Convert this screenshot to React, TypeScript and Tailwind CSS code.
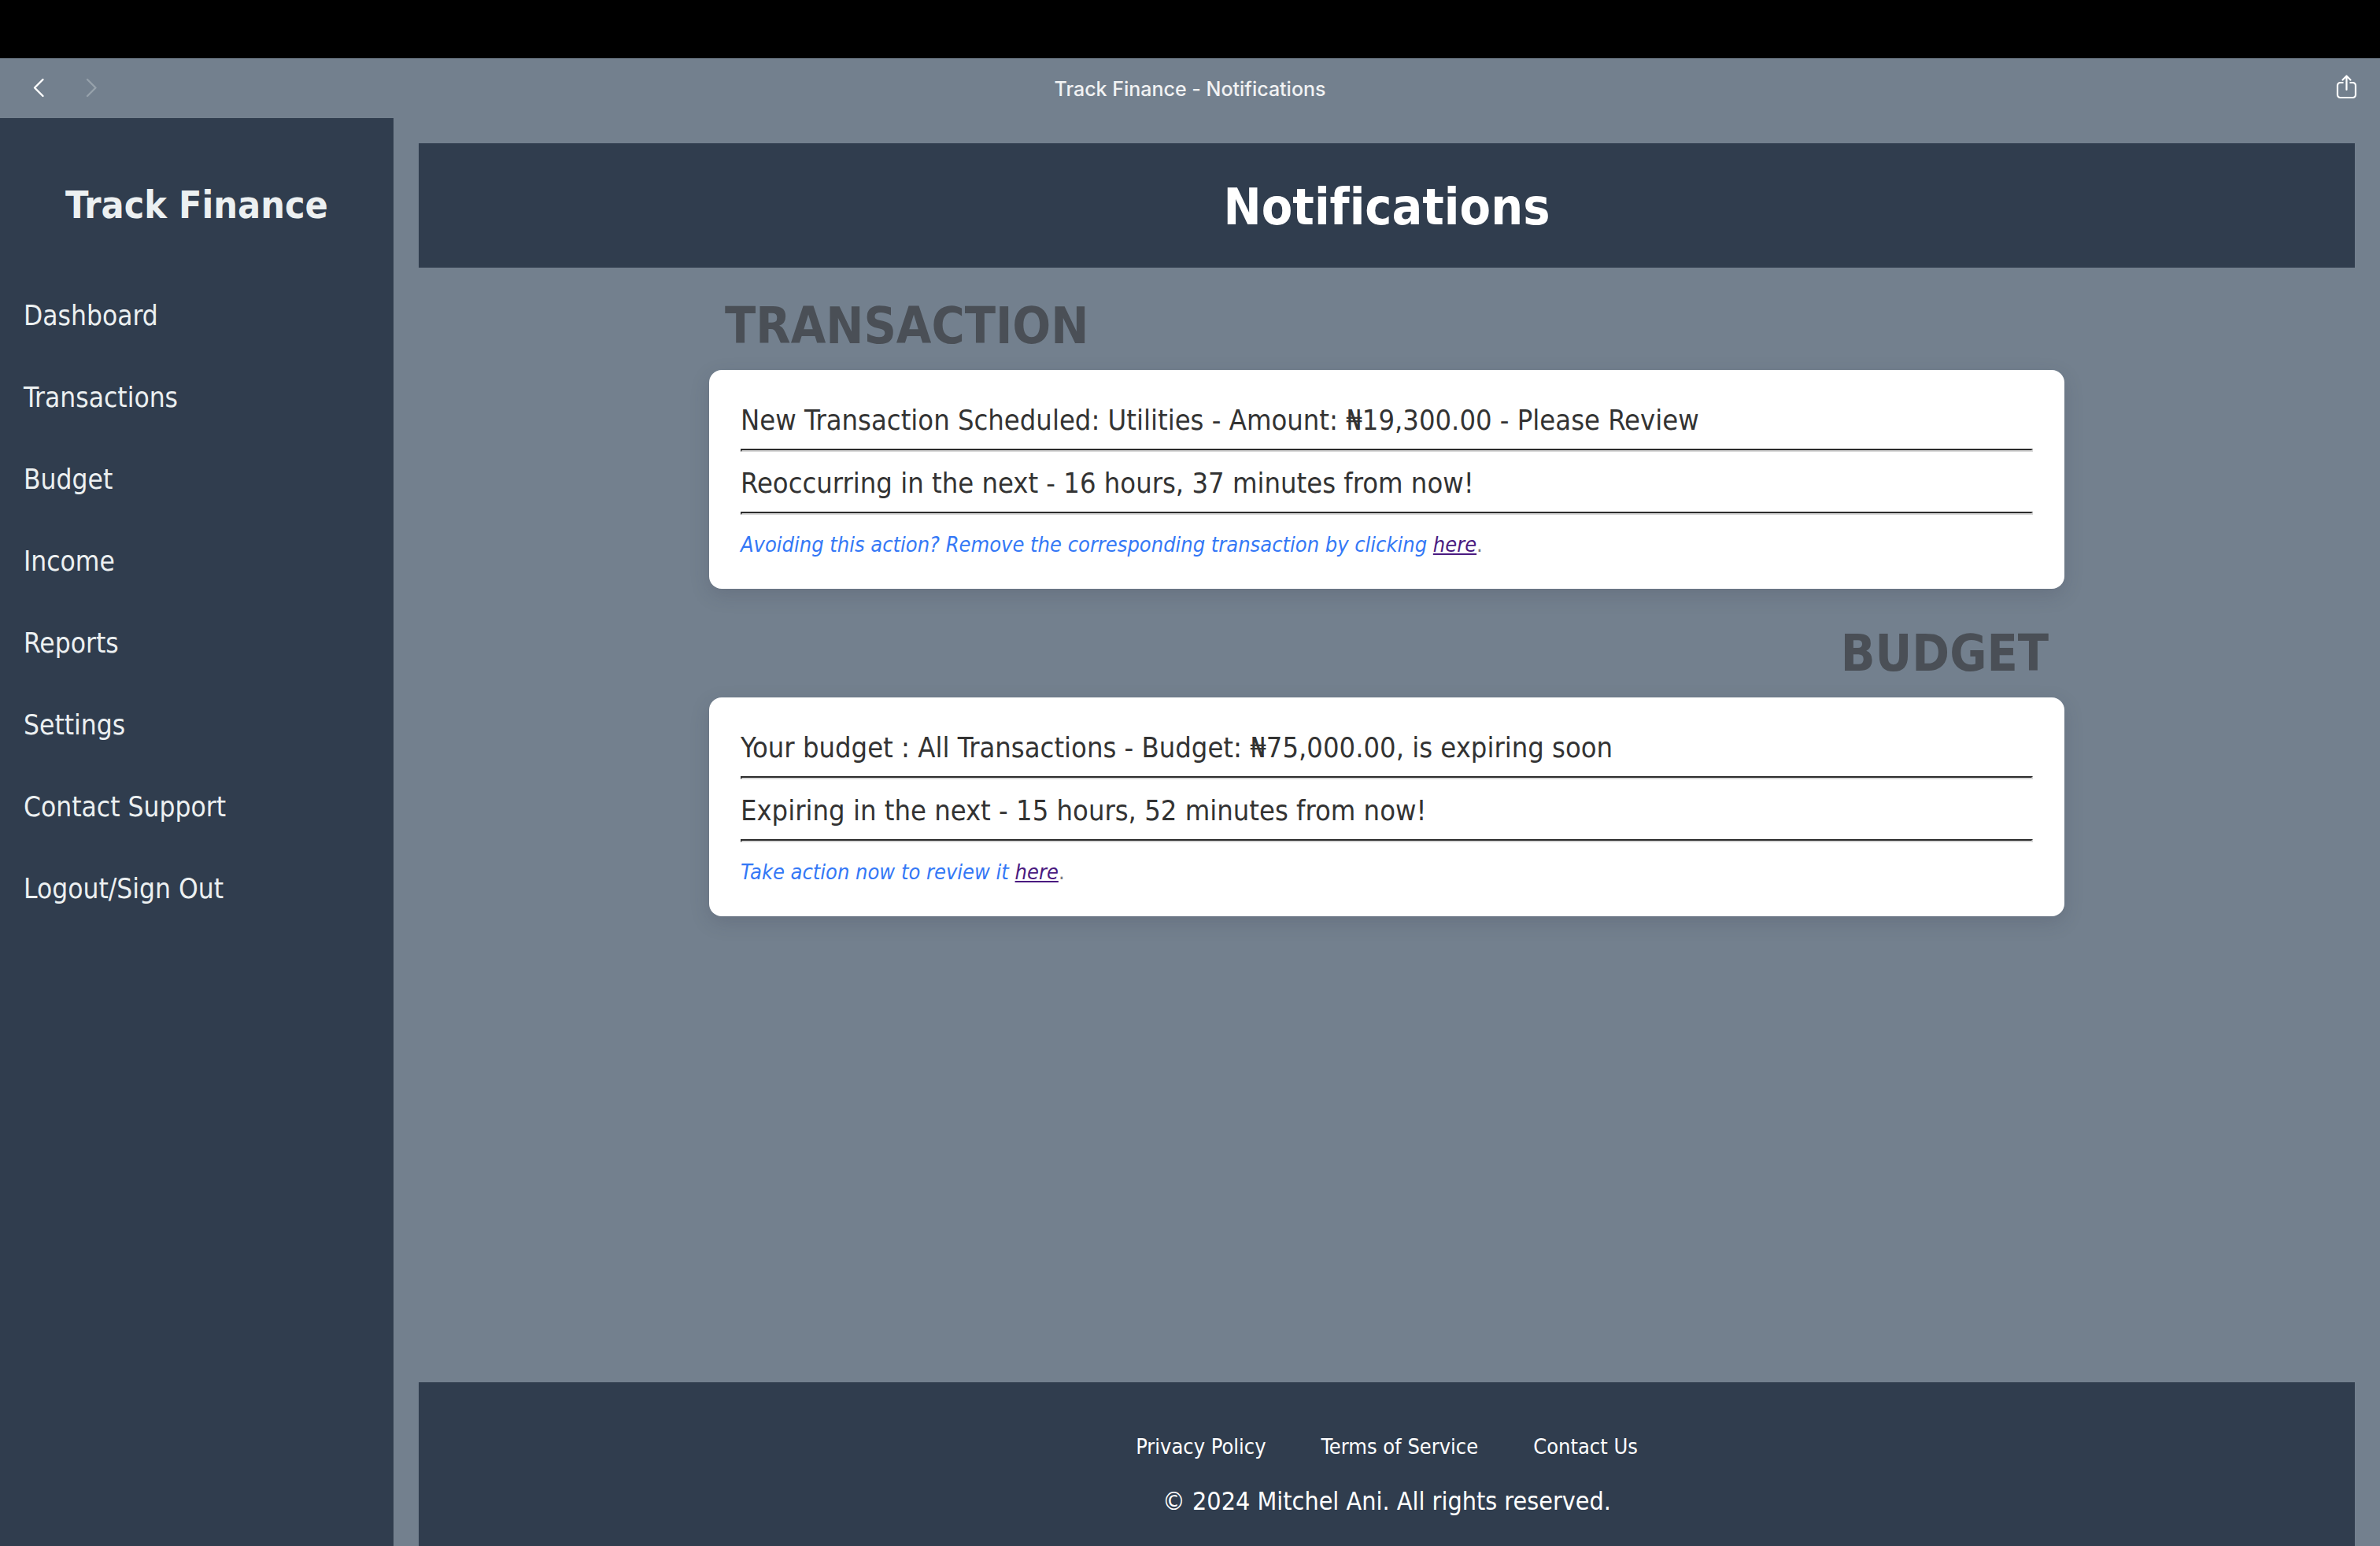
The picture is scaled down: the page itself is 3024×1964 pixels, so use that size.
import React from "react";

const navItems = [
  "Dashboard",
  "Transactions",
  "Budget",
  "Income",
  "Reports",
  "Settings",
  "Contact Support",
  "Logout/Sign Out",
];

const footerLinks = ["Privacy Policy", "Terms of Service", "Contact Us"];

type Notice = {
  heading: string;
  alignEnd: boolean;
  title: string;
  timing: string;
  action: string;
};

const notices: Notice[] = [
  {
    heading: "TRANSACTION",
    alignEnd: false,
    title: "New Transaction Scheduled: Utilities - Amount: ₦19,300.00 - Please Review",
    timing: "Reoccurring in the next - 16 hours, 37 minutes from now!",
    action: "Avoiding this action? Remove the corresponding transaction by clicking",
  },
  {
    heading: "BUDGET",
    alignEnd: true,
    title: "Your budget : All Transactions - Budget: ₦75,000.00, is expiring soon",
    timing: "Expiring in the next - 15 hours, 52 minutes from now!",
    action: "Take action now to review it",
  },
];

function TitleBar() {
  return (
    <div className="grid h-[76px] grid-cols-[1fr_auto_1fr] items-center px-7 font-['Inter',sans-serif]">
      <div className="flex items-center gap-10 pb-0.5 pl-2">
        <button type="button" aria-label="Back" className="text-white">
          <svg width="28" height="28" viewBox="0 0 28 28" fill="none" stroke="currentColor" strokeWidth="2.4" strokeLinecap="round" strokeLinejoin="round">
            <path d="M18.500 4 L8 14.500 L18.500 25" />
          </svg>
        </button>
        <button type="button" aria-label="Forward" disabled className="text-[#96a1ab]">
          <svg width="28" height="28" viewBox="0 0 28 28" fill="none" stroke="currentColor" strokeWidth="2.4" strokeLinecap="round" strokeLinejoin="round">
            <path d="M7 4 L17.500 14.500 L7 25" />
          </svg>
        </button>
      </div>
      <p className="pt-0.5 text-[25px] leading-8 font-medium text-[#f1f2f3]">Track Finance - Notifications</p>
      <button type="button" aria-label="Share" className="justify-self-end pb-1 text-white">
        <svg width="28" height="34" viewBox="0 0 28 34" fill="none" stroke="currentColor" strokeWidth="2.2" strokeLinecap="round" strokeLinejoin="round">
          <path d="M9.500 12 H5.500 A3.500 3.500 0 0 0 2 15.500 V27.500 A3.500 3.500 0 0 0 5.500 31 H21.500 A3.500 3.500 0 0 0 25 27.500 V15.500 A3.500 3.500 0 0 0 21.500 12 H17.500" strokeLinecap="butt" />
          <path d="M13.500 21 V4 M8.500 8.500 L13.500 3.500 L18.500 8.500" />
        </svg>
      </button>
    </div>
  );
}

function Sidebar() {
  return (
    <aside className="w-[500px] shrink-0 bg-[#303d4e] pt-[82px] text-[#ecf0f1]">
      <h2 className="text-center text-[48px] leading-[56px] font-bold">Track Finance</h2>
      <nav className="mt-[61px] flex flex-col">
        {navItems.map((item) => (
          <a key={item} href="#" className="px-[30px] py-7 text-[35px] leading-[48px]">
            {item}
          </a>
        ))}
      </nav>
    </aside>
  );
}

function Divider() {
  return (
    <hr className="mt-3 mb-4 border-2 border-t-[#2c2c2c] border-r-[#d8d8d8] border-b-[#d8d8d8] border-l-[#2c2c2c]" />
  );
}

function NoticeSection({ notice }: { notice: Notice }) {
  return (
    <section>
      <h2
        className={
          notice.alignEnd
            ? "mb-[18px] px-5 text-right text-[64px] leading-[76px] font-bold text-[#4a4f56]"
            : "mb-[18px] px-5 text-left text-[64px] leading-[76px] font-bold text-[#4a4f56]"
        }
      >
        {notice.heading}
      </h2>
      <div className="rounded-2xl bg-white px-10 pt-10 pb-[34px] text-[#333333] shadow-[0_8px_24px_rgba(50,50,70,0.18)]">
        <p className="text-4xl leading-[48px]">{notice.title}</p>
        <Divider />
        <p className="text-4xl leading-[48px]">{notice.timing}</p>
        <Divider />
        <p className="text-[27px] leading-[44px] text-[#777c82]">
          <em className="text-[#3478f6]">{notice.action} </em>
          <a href="#" className="text-[#4a1a80] italic underline">
            here
          </a>
          .
        </p>
      </div>
    </section>
  );
}

function Footer() {
  return (
    <footer className="mt-auto flex flex-col items-center bg-[#303d4e] pt-[60px] pb-[33px] text-white">
      <nav className="flex gap-[70px] text-[27px] leading-[44px]">
        {footerLinks.map((link) => (
          <a key={link} href="#">
            {link}
          </a>
        ))}
      </nav>
      <p className="mt-[23px] text-[32px] leading-[48px]">© 2024 Mitchel Ani. All rights reserved.</p>
    </footer>
  );
}

export default function App() {
  return (
    <div className="flex min-h-screen flex-col bg-[#73808e] font-['DejaVu_Sans_Condensed','DejaVu_Sans',sans-serif] [font-variant-ligatures:none]">
      <div className="h-[74px] bg-black" />
      <TitleBar />
      <div className="flex grow">
        <Sidebar />
        <div className="flex grow flex-col px-8 pt-8">
          <header className="bg-[#303d4e] pt-[43px] pb-[39px]">
            <h1 className="text-center text-[64px] leading-[76px] font-bold text-white">Notifications</h1>
          </header>
          <main className="mx-auto mt-9 mb-11 flex w-[70%] flex-col gap-11">
            {notices.map((notice) => (
              <NoticeSection key={notice.heading} notice={notice} />
            ))}
          </main>
          <Footer />
        </div>
      </div>
    </div>
  );
}
